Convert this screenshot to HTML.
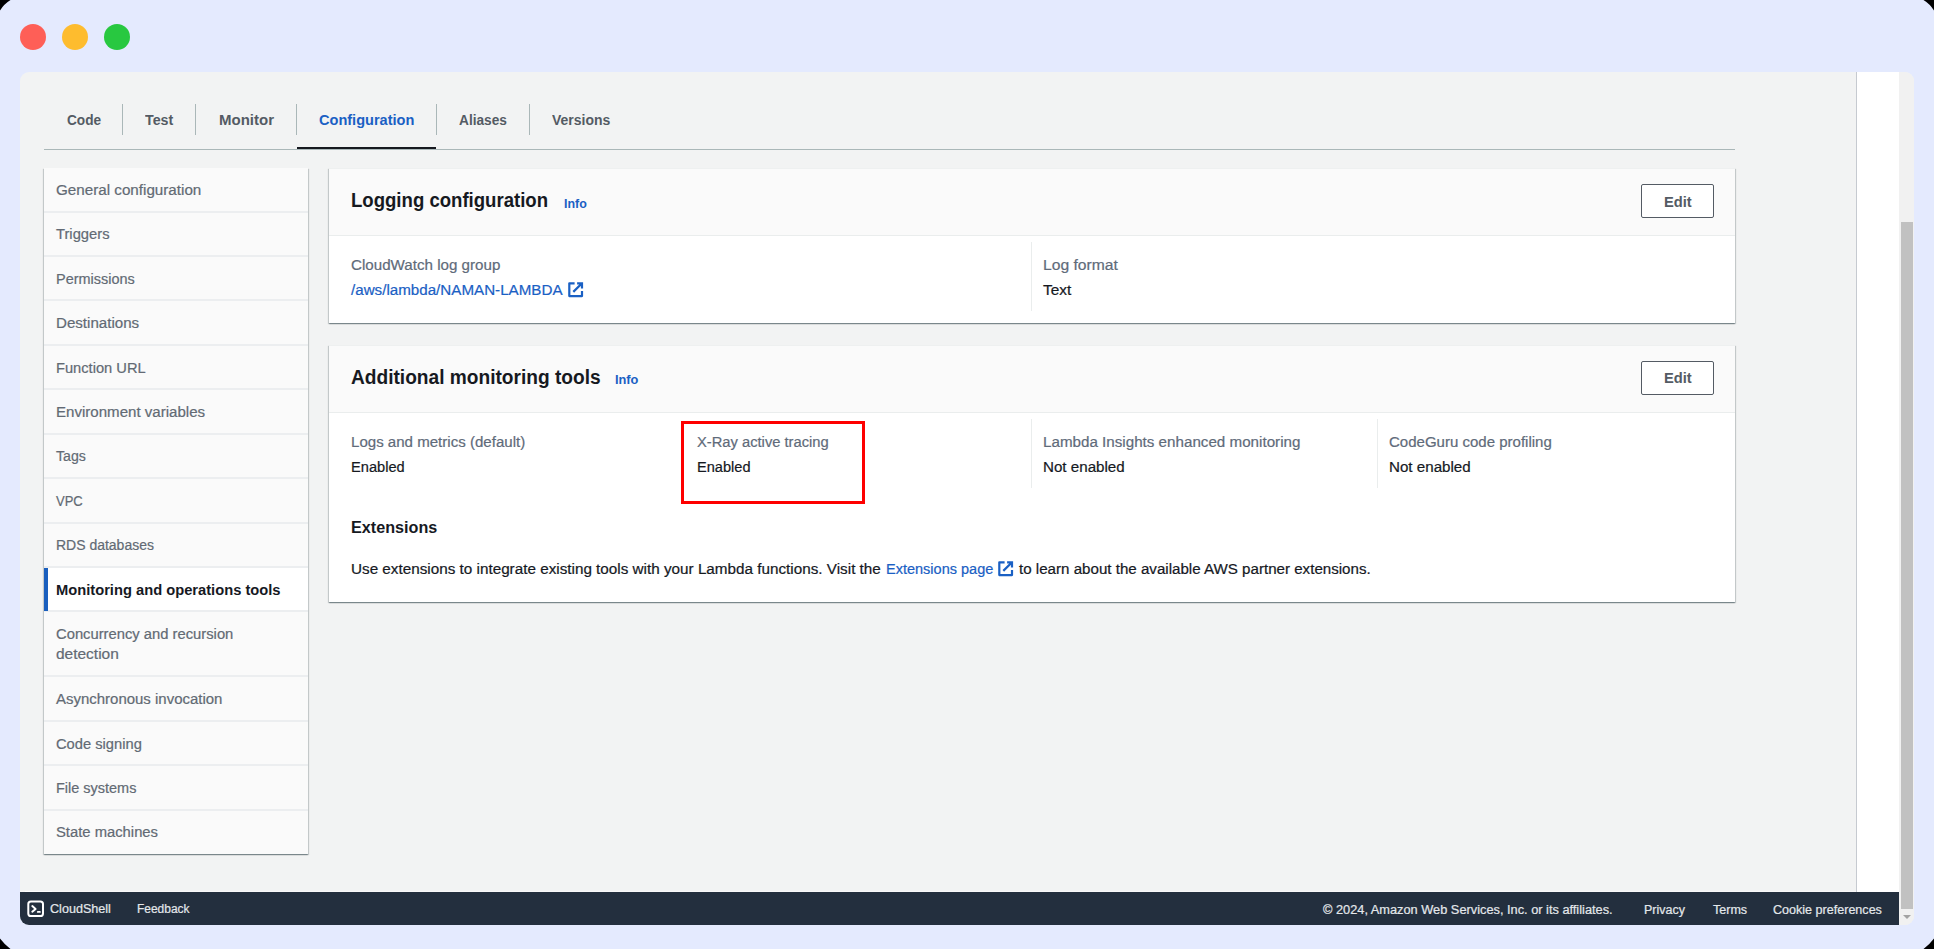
<!DOCTYPE html>
<html><head><meta charset="utf-8"><style>
html,body{margin:0;padding:0;}
body{width:1934px;height:949px;position:relative;overflow:hidden;background:#e4eafe;font-family:"Liberation Sans",sans-serif;}
.abs{position:absolute;}
.t{position:absolute;white-space:nowrap;transform-origin:0 0;}
.ic{position:absolute;}
</style></head><body>
<div class="abs" style="left:0;top:0;width:1934px;height:949px;background:#e4eafe"></div>
<svg class="abs" style="left:0;top:0" width="1934" height="949" viewBox="0 0 1934 949">
<path d="M0 0H10.5Q4 4 0 10.5Z M1934 0H1923.5Q1930 4 1934 10.5Z M0 949H10.5Q4.5 944.5 0 938.5Z M1934 949H1923.5Q1929.5 944.5 1934 938.5Z" fill="#000"/>
</svg>
<div class="abs" style="left:20px;top:24px;width:26px;height:26px;border-radius:50%;background:#fe5f57"></div>
<div class="abs" style="left:62px;top:24px;width:26px;height:26px;border-radius:50%;background:#febc2e"></div>
<div class="abs" style="left:104px;top:24px;width:26px;height:26px;border-radius:50%;background:#28c840"></div>
<!-- window -->
<div class="abs" style="left:20px;top:72px;width:1894px;height:853px;border-radius:9px;overflow:hidden;background:#f2f3f3">
  <div class="abs" style="left:1836px;top:0;width:1px;height:820px;background:#c6cad0"></div>
  <div class="abs" style="left:1837px;top:0;width:42px;height:820px;background:#fff"></div>
  <div class="abs" style="left:1879px;top:0;width:15px;height:853px;background:#f1f1f1"></div>
  <div class="abs" style="left:1881px;top:150px;width:12px;height:687px;background:#c1c1c1"></div>
  <div class="abs" style="left:1883px;top:842.5px;width:0;height:0;border-left:4px solid transparent;border-right:4px solid transparent;border-top:4.5px solid #a3a3a3"></div>
  <div class="abs" style="left:0;top:819px;width:1836px;height:1px;background:#f8f8f8"></div>
  <div class="abs" style="left:5px;top:819px;width:27px;height:1px;background:#ffffff"></div>
  <div class="abs" style="left:0;top:820px;width:1879px;height:33px;background:#232f3e"></div>
</div>
<!-- tabs -->
<div class="abs" style="left:44px;top:149px;width:1691px;height:1px;background:#aab7b8"></div>
<div class="abs" style="left:297px;top:147px;width:139px;height:2px;background:#16191f"></div>
<div class="abs" style="left:122px;top:104px;width:1px;height:31px;background:#aab7b8"></div>
<div class="abs" style="left:195px;top:104px;width:1px;height:31px;background:#aab7b8"></div>
<div class="abs" style="left:296px;top:104px;width:1px;height:31px;background:#aab7b8"></div>
<div class="abs" style="left:436px;top:104px;width:1px;height:31px;background:#aab7b8"></div>
<div class="abs" style="left:529px;top:104px;width:1px;height:31px;background:#aab7b8"></div>
<!-- nav panel -->
<div class="abs" style="left:44px;top:167.5px;width:264px;height:686.9px;border-top:0;box-shadow:0 1px 1px 0 rgba(0,28,36,.3),1px 1px 1px 0 rgba(0,28,36,.15),-1px 1px 1px 0 rgba(0,28,36,.15);background:#fafafa"></div>
<div class="abs" style="left:44px;top:168.00px;width:264px;height:42.50px;background:#fafafa"></div><div class="abs" style="left:44px;top:212.50px;width:264px;height:42.44px;background:#fafafa"></div><div class="abs" style="left:44px;top:256.94px;width:264px;height:42.44px;background:#fafafa"></div><div class="abs" style="left:44px;top:301.38px;width:264px;height:42.44px;background:#fafafa"></div><div class="abs" style="left:44px;top:345.82px;width:264px;height:42.44px;background:#fafafa"></div><div class="abs" style="left:44px;top:390.26px;width:264px;height:42.44px;background:#fafafa"></div><div class="abs" style="left:44px;top:434.70px;width:264px;height:42.44px;background:#fafafa"></div><div class="abs" style="left:44px;top:479.14px;width:264px;height:42.44px;background:#fafafa"></div><div class="abs" style="left:44px;top:523.58px;width:264px;height:42.44px;background:#fafafa"></div><div class="abs" style="left:44px;top:568.02px;width:264px;height:42.44px;background:#ffffff"></div><div class="abs" style="left:44px;top:612.46px;width:264px;height:62.94px;background:#fafafa"></div><div class="abs" style="left:44px;top:677.40px;width:264px;height:42.44px;background:#fafafa"></div><div class="abs" style="left:44px;top:721.84px;width:264px;height:42.44px;background:#fafafa"></div><div class="abs" style="left:44px;top:766.28px;width:264px;height:42.44px;background:#fafafa"></div><div class="abs" style="left:44px;top:810.72px;width:264px;height:43.68px;background:#fafafa"></div>
<div class="abs" style="left:44px;top:210.50px;width:264px;height:2px;background:#eceef0"></div><div class="abs" style="left:44px;top:254.94px;width:264px;height:2px;background:#eceef0"></div><div class="abs" style="left:44px;top:299.38px;width:264px;height:2px;background:#eceef0"></div><div class="abs" style="left:44px;top:343.82px;width:264px;height:2px;background:#eceef0"></div><div class="abs" style="left:44px;top:388.26px;width:264px;height:2px;background:#eceef0"></div><div class="abs" style="left:44px;top:432.70px;width:264px;height:2px;background:#eceef0"></div><div class="abs" style="left:44px;top:477.14px;width:264px;height:2px;background:#eceef0"></div><div class="abs" style="left:44px;top:521.58px;width:264px;height:2px;background:#eceef0"></div><div class="abs" style="left:44px;top:566.02px;width:264px;height:2px;background:#eceef0"></div><div class="abs" style="left:44px;top:610.46px;width:264px;height:2px;background:#eceef0"></div><div class="abs" style="left:44px;top:675.40px;width:264px;height:2px;background:#eceef0"></div><div class="abs" style="left:44px;top:719.84px;width:264px;height:2px;background:#eceef0"></div><div class="abs" style="left:44px;top:764.28px;width:264px;height:2px;background:#eceef0"></div><div class="abs" style="left:44px;top:808.72px;width:264px;height:2px;background:#eceef0"></div>
<div class="abs" style="left:44px;top:568px;width:4px;height:42.5px;background:#1a5fbe"></div>
<!-- card 1 -->
<div class="abs" style="left:329px;top:168px;width:1406px;height:154.5px;background:#fff;box-shadow:0 1px 1px 0 rgba(0,28,36,.3),1px 1px 1px 0 rgba(0,28,36,.15),-1px 1px 1px 0 rgba(0,28,36,.15)">
  <div class="abs" style="left:0;top:0;width:1406px;height:67px;background:#fafafa;border-bottom:1px solid #eaeded"></div>
  <div class="abs" style="left:0;top:0;width:1406px;height:1px;background:#eef0f0"></div>
  <div class="abs" style="left:702px;top:74px;width:1px;height:69px;background:#eaeded"></div>
</div>
<div class="abs" style="left:1641px;top:184px;width:71px;height:32px;border:1px solid #545b64;border-radius:2px;background:#fff"></div>
<!-- card 2 -->
<div class="abs" style="left:329px;top:344.5px;width:1406px;height:257.5px;background:#fff;box-shadow:0 1px 1px 0 rgba(0,28,36,.3),1px 1px 1px 0 rgba(0,28,36,.15),-1px 1px 1px 0 rgba(0,28,36,.15)">
  <div class="abs" style="left:0;top:0;width:1406px;height:67px;background:#fafafa;border-bottom:1px solid #eaeded"></div>
  <div class="abs" style="left:0;top:0;width:1406px;height:1px;background:#eef0f0"></div>
  <div class="abs" style="left:702px;top:74px;width:1px;height:69.5px;background:#eaeded"></div>
  <div class="abs" style="left:1048px;top:74px;width:1px;height:69.5px;background:#eaeded"></div>
</div>
<div class="abs" style="left:1641px;top:361px;width:71px;height:32px;border:1px solid #545b64;border-radius:2px;background:#fff"></div>
<div class="abs" style="left:680.5px;top:421px;width:178px;height:77px;border:3.5px solid #fe0000"></div>
<div class="t" style="left:66.60px;top:113.05px;font-size:14px;line-height:14px;font-weight:700;color:#545b64;transform:scaleX(0.9743)">Code</div>
<div class="t" style="left:145.40px;top:113.05px;font-size:14px;line-height:14px;font-weight:700;color:#545b64;transform:scaleX(1.0162)">Test</div>
<div class="t" style="left:218.60px;top:113.05px;font-size:14px;line-height:14px;font-weight:700;color:#545b64;transform:scaleX(1.0717)">Monitor</div>
<div class="t" style="left:319.00px;top:113.05px;font-size:14px;line-height:14px;font-weight:700;color:#1a60c4;transform:scaleX(1.0386)">Configuration</div>
<div class="t" style="left:459.40px;top:113.05px;font-size:14px;line-height:14px;font-weight:700;color:#545b64;transform:scaleX(0.9770)">Aliases</div>
<div class="t" style="left:552.10px;top:113.05px;font-size:14px;line-height:14px;font-weight:700;color:#545b64;transform:scaleX(0.9971)">Versions</div>
<div class="t" style="left:55.70px;top:182.75px;font-size:14px;line-height:14px;font-weight:400;color:#626a74;transform:scaleX(1.0855);-webkit-text-stroke:0.2px #626a74">General configuration</div>
<div class="t" style="left:55.70px;top:227.19px;font-size:14px;line-height:14px;font-weight:400;color:#626a74;transform:scaleX(1.0525);-webkit-text-stroke:0.2px #626a74">Triggers</div>
<div class="t" style="left:55.70px;top:271.63px;font-size:14px;line-height:14px;font-weight:400;color:#626a74;transform:scaleX(1.0323);-webkit-text-stroke:0.2px #626a74">Permissions</div>
<div class="t" style="left:55.70px;top:316.07px;font-size:14px;line-height:14px;font-weight:400;color:#626a74;transform:scaleX(1.0787);-webkit-text-stroke:0.2px #626a74">Destinations</div>
<div class="t" style="left:55.70px;top:360.51px;font-size:14px;line-height:14px;font-weight:400;color:#626a74;transform:scaleX(1.0480);-webkit-text-stroke:0.2px #626a74">Function URL</div>
<div class="t" style="left:55.70px;top:404.95px;font-size:14px;line-height:14px;font-weight:400;color:#626a74;transform:scaleX(1.0765);-webkit-text-stroke:0.2px #626a74">Environment variables</div>
<div class="t" style="left:55.70px;top:449.39px;font-size:14px;line-height:14px;font-weight:400;color:#626a74;transform:scaleX(1.0112);-webkit-text-stroke:0.2px #626a74">Tags</div>
<div class="t" style="left:55.70px;top:493.83px;font-size:14px;line-height:14px;font-weight:400;color:#626a74;transform:scaleX(0.9274);-webkit-text-stroke:0.2px #626a74">VPC</div>
<div class="t" style="left:55.70px;top:538.27px;font-size:14px;line-height:14px;font-weight:400;color:#626a74;transform:scaleX(0.9985);-webkit-text-stroke:0.2px #626a74">RDS databases</div>
<div class="t" style="left:55.70px;top:582.71px;font-size:14px;line-height:14px;font-weight:700;color:#16191f;transform:scaleX(1.0497)">Monitoring and operations tools</div>
<div class="t" style="left:55.70px;top:627.15px;font-size:14px;line-height:14px;font-weight:400;color:#626a74;transform:scaleX(1.0549);-webkit-text-stroke:0.2px #626a74">Concurrency and recursion</div>
<div class="t" style="left:55.70px;top:647.45px;font-size:14px;line-height:14px;font-weight:400;color:#626a74;transform:scaleX(1.1052);-webkit-text-stroke:0.2px #626a74">detection</div>
<div class="t" style="left:55.70px;top:692.09px;font-size:14px;line-height:14px;font-weight:400;color:#626a74;transform:scaleX(1.0691);-webkit-text-stroke:0.2px #626a74">Asynchronous invocation</div>
<div class="t" style="left:55.70px;top:736.53px;font-size:14px;line-height:14px;font-weight:400;color:#626a74;transform:scaleX(1.0499);-webkit-text-stroke:0.2px #626a74">Code signing</div>
<div class="t" style="left:55.70px;top:780.97px;font-size:14px;line-height:14px;font-weight:400;color:#626a74;transform:scaleX(1.0336);-webkit-text-stroke:0.2px #626a74">File systems</div>
<div class="t" style="left:55.70px;top:825.41px;font-size:14px;line-height:14px;font-weight:400;color:#626a74;transform:scaleX(1.0570);-webkit-text-stroke:0.2px #626a74">State machines</div>
<div class="t" style="left:351.20px;top:190.37px;font-size:20px;line-height:20px;font-weight:700;color:#16191f;transform:scaleX(0.9285)">Logging configuration</div>
<div class="t" style="left:563.90px;top:197.94px;font-size:12px;line-height:12px;font-weight:700;color:#1a60c4;transform:scaleX(1.0368)">Info</div>
<div class="t" style="left:1664.00px;top:194.65px;font-size:14px;line-height:14px;font-weight:700;color:#545b64;transform:scaleX(1.0477)">Edit</div>
<div class="t" style="left:351.00px;top:258.05px;font-size:14px;line-height:14px;font-weight:400;color:#5f6b7a;transform:scaleX(1.0819);-webkit-text-stroke:0.2px #5f6b7a">CloudWatch log group</div>
<div class="t" style="left:351.00px;top:282.95px;font-size:14px;line-height:14px;font-weight:400;color:#1a60c4;transform:scaleX(1.0831);-webkit-text-stroke:0.2px #1a60c4">/aws/lambda/NAMAN-LAMBDA</div>
<div class="t" style="left:1042.70px;top:258.05px;font-size:14px;line-height:14px;font-weight:400;color:#5f6b7a;transform:scaleX(1.1178);-webkit-text-stroke:0.2px #5f6b7a">Log format</div>
<div class="t" style="left:1042.70px;top:282.95px;font-size:14px;line-height:14px;font-weight:400;color:#16191f;transform:scaleX(1.1020);-webkit-text-stroke:0.2px #16191f">Text</div>
<div class="t" style="left:350.60px;top:367.07px;font-size:20px;line-height:20px;font-weight:700;color:#16191f;transform:scaleX(0.9560)">Additional monitoring tools</div>
<div class="t" style="left:614.50px;top:374.44px;font-size:12px;line-height:12px;font-weight:700;color:#1a60c4;transform:scaleX(1.0641)">Info</div>
<div class="t" style="left:1664.00px;top:371.15px;font-size:14px;line-height:14px;font-weight:700;color:#545b64;transform:scaleX(1.0477)">Edit</div>
<div class="t" style="left:350.80px;top:434.65px;font-size:14px;line-height:14px;font-weight:400;color:#5f6b7a;transform:scaleX(1.0763);-webkit-text-stroke:0.2px #5f6b7a">Logs and metrics (default)</div>
<div class="t" style="left:350.80px;top:460.15px;font-size:14px;line-height:14px;font-weight:400;color:#16191f;transform:scaleX(1.0452);-webkit-text-stroke:0.2px #16191f">Enabled</div>
<div class="t" style="left:697.10px;top:434.65px;font-size:14px;line-height:14px;font-weight:400;color:#5f6b7a;transform:scaleX(1.0513);-webkit-text-stroke:0.2px #5f6b7a">X-Ray active tracing</div>
<div class="t" style="left:697.10px;top:460.15px;font-size:14px;line-height:14px;font-weight:400;color:#16191f;transform:scaleX(1.0413);-webkit-text-stroke:0.2px #16191f">Enabled</div>
<div class="t" style="left:1043.20px;top:434.65px;font-size:14px;line-height:14px;font-weight:400;color:#5f6b7a;transform:scaleX(1.0843);-webkit-text-stroke:0.2px #5f6b7a">Lambda Insights enhanced monitoring</div>
<div class="t" style="left:1043.20px;top:460.15px;font-size:14px;line-height:14px;font-weight:400;color:#16191f;transform:scaleX(1.0821);-webkit-text-stroke:0.2px #16191f">Not enabled</div>
<div class="t" style="left:1389.20px;top:434.65px;font-size:14px;line-height:14px;font-weight:400;color:#5f6b7a;transform:scaleX(1.0727);-webkit-text-stroke:0.2px #5f6b7a">CodeGuru code profiling</div>
<div class="t" style="left:1389.20px;top:460.15px;font-size:14px;line-height:14px;font-weight:400;color:#16191f;transform:scaleX(1.0821);-webkit-text-stroke:0.2px #16191f">Not enabled</div>
<div class="t" style="left:351.10px;top:519.41px;font-size:17px;line-height:17px;font-weight:700;color:#16191f;transform:scaleX(0.9516)">Extensions</div>
<div class="t" style="left:351.00px;top:562.35px;font-size:14px;line-height:14px;font-weight:400;color:#16191f;transform:scaleX(1.0899);-webkit-text-stroke:0.2px #16191f">Use extensions to integrate existing tools with your Lambda functions. Visit the</div>
<div class="t" style="left:885.80px;top:562.35px;font-size:14px;line-height:14px;font-weight:400;color:#1a60c4;transform:scaleX(1.0365);-webkit-text-stroke:0.2px #1a60c4">Extensions page</div>
<div class="t" style="left:1018.60px;top:562.35px;font-size:14px;line-height:14px;font-weight:400;color:#16191f;transform:scaleX(1.0803);-webkit-text-stroke:0.2px #16191f">to learn about the available AWS partner extensions.</div>
<div class="t" style="left:49.60px;top:903.44px;font-size:12px;line-height:12px;font-weight:400;color:#e4e8eb;transform:scaleX(1.0493);-webkit-text-stroke:0.2px #e4e8eb">CloudShell</div>
<div class="t" style="left:137.10px;top:903.44px;font-size:12px;line-height:12px;font-weight:400;color:#e4e8eb;transform:scaleX(0.9958);-webkit-text-stroke:0.2px #e4e8eb">Feedback</div>
<div class="t" style="left:1322.50px;top:904.24px;font-size:12px;line-height:12px;font-weight:400;color:#e4e8eb;transform:scaleX(1.0653);-webkit-text-stroke:0.2px #e4e8eb">© 2024, Amazon Web Services, Inc. or its affiliates.</div>
<div class="t" style="left:1644.30px;top:904.24px;font-size:12px;line-height:12px;font-weight:400;color:#e4e8eb;transform:scaleX(1.0397);-webkit-text-stroke:0.2px #e4e8eb">Privacy</div>
<div class="t" style="left:1712.50px;top:904.24px;font-size:12px;line-height:12px;font-weight:400;color:#e4e8eb;transform:scaleX(1.0438);-webkit-text-stroke:0.2px #e4e8eb">Terms</div>
<div class="t" style="left:1773.10px;top:904.24px;font-size:12px;line-height:12px;font-weight:400;color:#e4e8eb;transform:scaleX(1.0465);-webkit-text-stroke:0.2px #e4e8eb">Cookie preferences</div>
<svg class="ic" style="left:567.00px;top:281.10px" width="18" height="18" viewBox="0 0 18 18"><path d="M7.6 2.3H2.3V15.1H15V9.9" fill="none" stroke="#1a60c4" stroke-width="2.2" stroke-linejoin="round"/><path d="M10.1 2.3H15V7.6M15 2.3L6.3 10.9" fill="none" stroke="#1a60c4" stroke-width="2.2"/></svg>
<svg class="ic" style="left:997.00px;top:560.00px" width="18" height="18" viewBox="0 0 18 18"><path d="M7.6 2.3H2.3V15.1H15V9.9" fill="none" stroke="#1a60c4" stroke-width="2.2" stroke-linejoin="round"/><path d="M10.1 2.3H15V7.6M15 2.3L6.3 10.9" fill="none" stroke="#1a60c4" stroke-width="2.2"/></svg>
<!-- cloudshell icon -->
<svg class="ic" style="left:27px;top:900px" width="18" height="18" viewBox="0 0 18 18">
<rect x="1.3" y="1.5" width="14.7" height="14.5" rx="2.6" fill="none" stroke="#fff" stroke-width="2"/>
<path d="M5.3 6.1L8.6 8.9L5.3 11.7" fill="none" stroke="#fff" stroke-width="2" stroke-linecap="round" stroke-linejoin="round"/>
<rect x="9.9" y="11" width="3.9" height="1.8" rx="0.9" fill="#fff"/>
</svg>
</body></html>
